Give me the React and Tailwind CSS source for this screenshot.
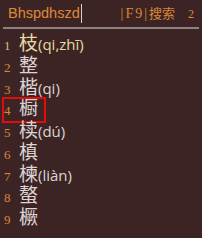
import React from "react";

const rows = [
  { n: "1", c: "枝", p: "(qi,zhī)", first: true },
  { n: "2", c: "整" },
  { n: "3", c: "楷", p: "(qi)" },
  { n: "4", c: "橱", boxed: true },
  { n: "5", c: "椟", p: "(dú)" },
  { n: "6", c: "槙" },
  { n: "7", c: "楝", p: "(liàn)" },
  { n: "8", c: "螯" },
  { n: "9", c: "橛" },
];

const cjk = { fontFamily: '"Noto Sans CJK SC", sans-serif' };
const serif = { fontFamily: '"Liberation Serif", "Noto Sans CJK SC", serif' };

export default function App() {
  return (
    <div className="w-[202px] h-[238px] bg-[#3d2424] overflow-hidden">
      <div className="flex items-center h-[27px] pl-[8px] pr-[8px]">
        <span
          className="text-[14.5px] leading-none text-[#dc8a38]"
          style={{ fontFamily: '"Liberation Sans", sans-serif' }}
        >
          Bhspdhszd
        </span>
        <span className="ml-[1px] w-[1px] h-[19px] bg-[#d8cfcf]" />
        <span className="flex-1" />
        <span className="flex items-baseline text-[#d9863a] leading-none">
          <span className="text-[14px] tracking-[2px]" style={serif}>|F9|</span>
          <span className="text-[13px]" style={cjk}>搜索</span>
          <span className="ml-[13px] text-[12px]" style={serif}>2</span>
        </span>
      </div>
      <div className="mx-[3px] h-[2px] bg-[#8d8080]" />
      <div className="pt-[2px]">
        {rows.map((r) => (
          <div key={r.n} className="flex items-baseline h-[21.75px] leading-[21.75px] pl-[4px]">
            <span className="relative flex items-baseline">
              {r.boxed && (
                <span className="absolute left-[-2px] top-[1px] w-[44px] h-[26px] border-2 border-[#e30b0b]" />
              )}
              <span
                className={`w-[15px] text-[13px] ${r.first ? "text-[#cbbd8e]" : "text-[#d9863a]"}`}
                style={serif}
              >
                {r.n}
              </span>
              <span
                className={`text-[19px] ${r.first ? "text-[#e6daa6]" : "text-[#dcd4d4]"}`}
                style={cjk}
              >
                {r.c}
              </span>
            </span>
            {r.p && (
              <span
                className={`text-[15px] ${r.first ? "text-[#e6daa6]" : "text-[#dcd4d4]"}`}
                style={{ fontFamily: '"Open Sans", sans-serif' }}
              >
                {r.p}
              </span>
            )}
          </div>
        ))}
      </div>
    </div>
  );
}
